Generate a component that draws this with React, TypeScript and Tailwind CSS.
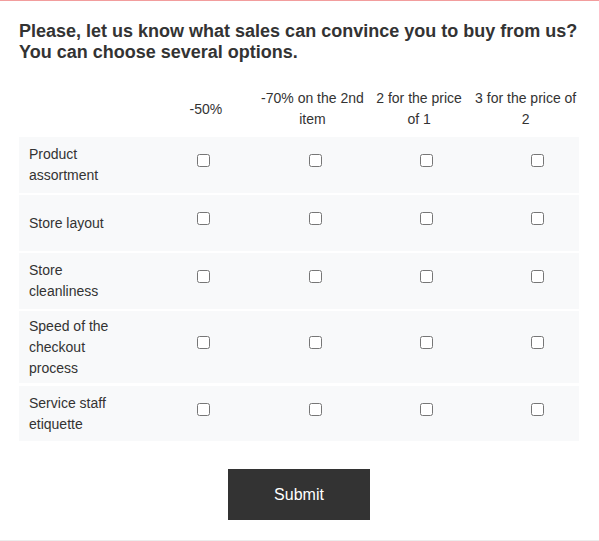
const COLUMNS: string[][] = [
  ["-50%"],
  ["-70% on the 2nd", "item"],
  ["2 for the price", "of 1"],
  ["3 for the price of", "2"],
];

const ROWS: { label: string; height: string }[] = [
  { label: "Product assortment", height: "h-[56px]" },
  { label: "Store layout", height: "h-[56px]" },
  { label: "Store cleanliness", height: "h-[56px]" },
  { label: "Speed of the checkout process", height: "h-[72px]" },
  { label: "Service staff etiquette", height: "h-[55px]" },
];

export default function App() {
  return (
    <div
      className="w-[599px] border-t border-b border-t-[#f29d9d] border-b-[#ececec] bg-white pl-[19px] pr-[20px] pt-[20px] pb-[20px] text-[#333333]"
      style={{ fontFamily: '"Liberation Sans", Arial, sans-serif' }}
    >
      <h1 className="text-[18px] font-bold leading-[21px]">
        Please, let us know what sales can convince you to buy from us?
        <br />
        You can choose several options.
      </h1>

      {/* column headers */}
      <div className="mt-[25px] mb-[7px] grid grid-cols-[133.5px_repeat(4,1fr)] items-center text-[14px] leading-[21px]">
        <div />
        {COLUMNS.map((lines, i) => (
          <div key={i} className="text-center whitespace-nowrap">
            {lines.map((l, j) => (
              <div key={j}>{l}</div>
            ))}
          </div>
        ))}
      </div>

      {/* matrix rows */}
      <div className="flex flex-col gap-[2px]">
        {ROWS.map((row, r) => (
          <div
            key={row.label}
            className={`grid grid-cols-[178px_112px_111px_111px_1fr] items-center bg-[#f8f9fa] ${row.height} ${r === 4 ? "mt-[1px]" : ""}`}
          >
            <div className="w-[110px] px-[10px] text-[14px] leading-[21px]">{row.label}</div>
            {COLUMNS.map((_, i) => (
              <input
                key={i}
                type="checkbox"
                aria-label={`${row.label} ${COLUMNS[i].join(" ")}`}
                className="m-0 mb-[9px] h-[13px] w-[13px] justify-self-start"
              />
            ))}
          </div>
        ))}
      </div>

      <div className="mt-[28px] flex justify-center">
        <button
          type="button"
          className="h-[51px] w-[142px] bg-[#333333] text-[16px] text-white"
        >
          Submit
        </button>
      </div>
    </div>
  );
}
